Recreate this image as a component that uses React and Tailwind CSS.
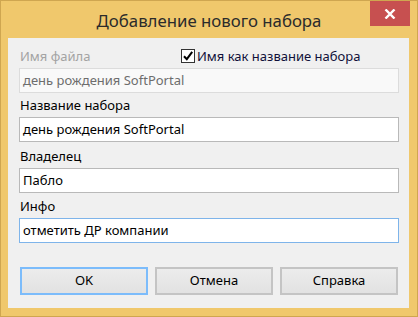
export default function App() {
  const font = { fontFamily: '"Noto Sans", "Open Sans", sans-serif' };

  return (
    <div
      className="w-[418px] h-[317px] bg-[#f0c86c] border border-[#cfa650] flex flex-col text-[13px] text-black"
      style={font}
    >
      {/* title bar */}
      <div className="relative h-[37px] flex items-center justify-center">
        <span className="text-[16.8px] text-[#2b2b2b] mt-[2px]">Добавление нового набора</span>
        <div className="absolute top-0 right-[7px] w-[40px] h-[25px] bg-[#c75050] flex items-center justify-center">
          <svg width="12" height="10" viewBox="0 0 12 10">
            <path d="M1.5 0.5 L10.5 9.5 M10.5 0.5 L1.5 9.5" stroke="#fff" strokeWidth="2.4" />
          </svg>
        </div>
      </div>

      {/* client area */}
      <div className="ml-[7px] mr-[8px] mb-[8px] flex-1 bg-[#f0f0f0] flex flex-col pl-[11px] pr-[10px]">
        <div className="flex items-center h-[16px] mt-[10px]">
          <span className="w-[162px] leading-[16px] text-[#a3a3a3] pl-[1px]">Имя файла</span>
          <span className="w-[14px] h-[14px] border border-[#333] bg-white flex items-center justify-center">
            <svg width="12" height="12" viewBox="0 0 12 12">
              <path d="M2 6.2 L4.8 9.2 L10.2 1.8" stroke="#000" strokeWidth="2" fill="none" />
            </svg>
          </span>
          <span className="ml-[2px] leading-[16px] text-[#10103a]">Имя как название набора</span>
        </div>
        <div className="mt-[4px] h-[25px] border border-[#dcdcdc] bg-[#f9f9f9] flex items-center px-[3px] text-[#6d6d6d]">
          день рождения SoftPortal
        </div>

        <div className="mt-[4px] h-[16px] leading-[16px] pl-[1px]">Название набора</div>
        <div className="mt-[4px] h-[25px] border border-[#b9b9b9] bg-white flex items-center px-[3px]">
          день рождения SoftPortal
        </div>

        <div className="mt-[6px] h-[16px] leading-[16px] pl-[1px]">Владелец</div>
        <div className="mt-[4px] h-[25px] border border-[#b9b9b9] bg-white flex items-center px-[3px]">
          Пабло
        </div>

        <div className="mt-[5px] h-[16px] leading-[16px] pl-[1px]">Инфо</div>
        <div className="mt-[4px] h-[25px] border border-[#7eb4ea] bg-white flex items-center px-[3px]">
          отметить ДР компании
        </div>

        <div className="mt-[24px] flex gap-[7px] pl-[1px]">
          <button className="w-[128px] h-[28px] border-2 border-[#7cbcfb] bg-gradient-to-b from-[#ececec] to-[#e2e2e2] text-[13px]">
            OK
          </button>
          <button className="w-[118px] h-[28px] border-2 border-[#c4c4c4] bg-gradient-to-b from-[#ececec] to-[#e2e2e2] text-[13px]">
            Отмена
          </button>
          <button className="w-[118px] h-[28px] border-2 border-[#c4c4c4] bg-gradient-to-b from-[#ececec] to-[#e2e2e2] text-[13px]">
            Справка
          </button>
        </div>
      </div>
    </div>
  );
}
